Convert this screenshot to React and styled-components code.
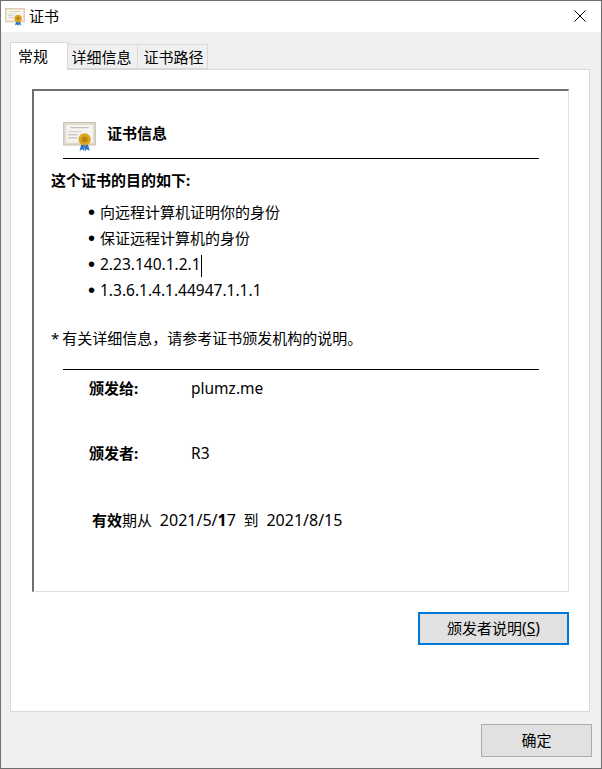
import styled, { createGlobalStyle } from "styled-components";

const FONT = `"Noto Sans", "Noto Sans CJK SC", sans-serif`;

const GlobalStyle = createGlobalStyle`
  html, body {
    margin: 0;
    padding: 0;
    background: #ffffff;
  }
  * {
    box-sizing: border-box;
  }
`;

function CertIcon({ width, frame, fill }) {
  return (
    <svg width={width} height={width * 0.9} viewBox="0 0 32 29">
      <rect x="0.5" y="0.5" width="31" height="22" fill={frame} stroke="#c8bfae" />
      <rect x="3" y="3" width="26" height="17" fill={fill} />
      <rect x="7" y="5" width="18" height="1" fill="#bdb8ad" />
      <rect x="5" y="9" width="13" height="1" fill="#d2cfc8" />
      <rect x="5" y="12" width="9" height="1" fill="#b0b8c4" />
      <rect x="5" y="15" width="9" height="1" fill="#b0b8c4" />
      <path d="M18 21 l-2 7 3-1.5 1.5 2 1-7z" fill="#2f74c8" />
      <path d="M24 21 l2 7-3-1.5-1.5 2-1-7z" fill="#2f74c8" />
      <circle cx="21" cy="17" r="6" fill="#dca41e" />
      <circle cx="21" cy="17" r="2.8" fill="#b8820f" />
    </svg>
  );
}

export default function App() {
  return (
    <SCWindow>
      <GlobalStyle />
      <SCTitleBar>
        <CertIcon width={20} frame="#f1dcb8" fill="#f9f7f2" />
        <SCTitle>证书</SCTitle>
        <SCClose aria-label="关闭">
          <svg width="12" height="12" viewBox="0 0 12 12">
            <path d="M0.5 0.5 L11.5 11.5 M11.5 0.5 L0.5 11.5" stroke="#000" strokeWidth="1" fill="none" />
          </svg>
        </SCClose>
      </SCTitleBar>

      <SCBody>
        <SCTabs>
          <SCTab $active>常规</SCTab>
          <SCTab $pad="0 2px 1px 0">详细信息</SCTab>
          <SCTab $pad="0 0 1px 2px">证书路径</SCTab>
        </SCTabs>

        <SCPanel>
          <SCCertBox>
            <SCHeader>
              <CertIcon width={33} frame="#e2dccf" fill="#f6f4ef" />
              <SCHeaderTitle>证书信息</SCHeaderTitle>
            </SCHeader>
            <SCPurposeTitle>这个证书的目的如下:</SCPurposeTitle>
            <SCPurposeList>
              <li>向远程计算机证明你的身份</li>
              <li>保证远程计算机的身份</li>
              <li>
                <SCLatin>2.23.140.1.2.1</SCLatin>
                <SCCaret />
              </li>
              <li>
                <SCLatin>1.3.6.1.4.1.44947.1.1.1</SCLatin>
              </li>
            </SCPurposeList>
            <SCNote>* 有关详细信息，请参考证书颁发机构的说明。</SCNote>
            <SCDivider />
            <SCInfoRow>
              <SCInfoLabel>颁发给:</SCInfoLabel>
              <SCLatin>plumz.me</SCLatin>
            </SCInfoRow>
            <SCInfoRow>
              <SCInfoLabel>颁发者:</SCInfoLabel>
              <SCLatin>R3</SCLatin>
            </SCInfoRow>
            <SCValidity>
              <b>有效</b>期从&nbsp;{" "}
              <SCDate>
                2021/5/<b>1</b>7
              </SCDate>
              &nbsp; 到&nbsp; <SCDate>2021/8/15</SCDate>
            </SCValidity>
          </SCCertBox>

          <SCPanelActions>
            <SCButton $focused $wide>
              <span>
                颁发者说明
                <SCLatin>
                  (<u>S</u>)
                </SCLatin>
              </span>
            </SCButton>
          </SCPanelActions>
        </SCPanel>

        <SCFooter>
          <SCButton>确定</SCButton>
        </SCFooter>
      </SCBody>
    </SCWindow>
  );
}

const SCWindow = styled.div`
  width: 602px;
  height: 769px;
  display: flex;
  flex-direction: column;
  border: 1px solid #6f6f6f;
  background: #f0f0f0;
  font-family: ${FONT};
  font-size: 15px;
  color: #000000;
  overflow: hidden;
`;

const SCTitleBar = styled.div`
  height: 31px;
  flex: none;
  display: flex;
  align-items: center;
  padding: 0 15px 0 4px;
  background: #ffffff;
`;

const SCTitle = styled.span`
  margin: 0 0 2px 4px;
  flex: 1;
`;

const SCClose = styled.div`
  width: 12px;
  height: 12px;
  display: flex;
  margin-top: -1px;
`;

const SCBody = styled.div`
  flex: 1;
  display: flex;
  flex-direction: column;
  padding: 10px 11px 11px 9px;
`;

const SCTabs = styled.div`
  display: flex;
  align-items: flex-end;
  height: 27px;
  flex: none;
  position: relative;
  z-index: 1;
`;

const SCTab = styled.div`
  width: ${(p) => (p.$active ? "58px" : "70px")};
  height: ${(p) => (p.$active ? "28px" : "25px")};
  margin-bottom: ${(p) => (p.$active ? "-1px" : "0")};
  padding: ${(p) => (p.$active ? "0 0 3px 7px" : p.$pad)};
  display: flex;
  align-items: center;
  justify-content: ${(p) => (p.$active ? "flex-start" : "center")};
  border: 1px solid #d9d9d9;
  border-bottom: ${(p) => (p.$active ? "none" : "1px solid #d9d9d9")};
  border-left: ${(p) => (p.$active ? "1px solid #d9d9d9" : "none")};
  background: ${(p) => (p.$active ? "#ffffff" : "#f0f0f0")};
`;

const SCPanel = styled.div`
  height: 643px;
  flex: none;
  display: flex;
  flex-direction: column;
  padding: 19px 20px 0 21px;
  background: #ffffff;
  border: 1px solid #d9d9d9;
`;

const SCCertBox = styled.div`
  height: 503px;
  flex: none;
  padding: 0 29px 0 17px;
  border-style: solid;
  border-width: 2px 1px 1px 2px;
  border-color: #6f6f6f #e0e0e0 #e0e0e0 #6f6f6f;
`;

const SCHeader = styled.div`
  height: 68px;
  display: flex;
  align-items: flex-end;
  gap: 11px;
  margin-left: 12px;
  padding-bottom: 6px;
  border-bottom: 1px solid #000000;
`;

const SCHeaderTitle = styled.span`
  font-weight: 700;
  line-height: 20px;
  margin-bottom: 9px;
`;

const SCPurposeTitle = styled.div`
  margin-top: 11px;
  font-weight: 700;
  line-height: 20px;
`;

const SCPurposeList = styled.ul`
  margin: 9px 0 0;
  padding: 0 0 0 49px;
  list-style: none;

  li {
    position: relative;
    height: 26px;
    line-height: 26px;
  }

  li::before {
    content: "•";
    position: absolute;
    left: -12px;
    font-family: "Liberation Sans", sans-serif;
    font-size: 20px;
  }
`;

const SCLatin = styled.span`
  font-size: 15.5px;
`;

const SCDate = styled.span`
  font-size: 16px;
`;

const SCCaret = styled.span`
  display: inline-block;
  width: 1px;
  height: 22px;
  vertical-align: middle;
  background: #000000;
`;

const SCNote = styled.div`
  margin-top: 25px;
  line-height: 20px;
  word-spacing: -1px;
`;

const SCDivider = styled.div`
  height: 1px;
  margin: 21px 0 0 12px;
  background: #000000;
`;

const SCInfoRow = styled.div`
  height: 65px;
  padding: 8px 0 0 38px;
  display: flex;
  line-height: 20px;
`;

const SCInfoLabel = styled.span`
  width: 102px;
  font-weight: 700;
  flex: none;
`;

const SCValidity = styled.div`
  padding: 10px 0 0 41px;
  line-height: 20px;
`;

const SCPanelActions = styled.div`
  display: flex;
  justify-content: flex-end;
  margin-top: 20px;
`;

const SCButton = styled.div`
  width: ${(p) => (p.$wide ? "151px" : "111px")};
  height: 33px;
  padding-bottom: 2px;
  display: flex;
  align-items: center;
  justify-content: center;
  background: #e1e1e1;
  border: ${(p) => (p.$focused ? "2px solid #0078d7" : "1px solid #adadad")};
`;

const SCFooter = styled.div`
  display: flex;
  justify-content: flex-end;
  margin: 12px -2px 0 0;
`;
